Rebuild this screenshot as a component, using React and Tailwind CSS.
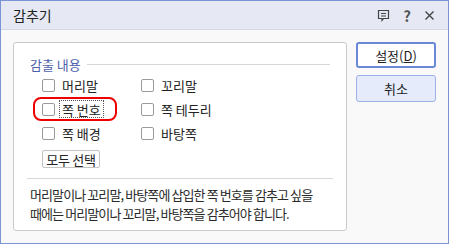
import React from "react";

const FONT = { fontFamily: '"Noto Sans CJK KR", "Noto Sans", sans-serif' };

function Check({ label, focused }) {
  return (
    <div className="flex items-center h-[24px]">
      <span className="w-[13px] h-[13px] border border-[#9a9a9a] rounded-[2px] bg-white shrink-0" />
      <span
        className={`ml-[4px] px-[2px] h-[18px] flex items-center border ${
          focused ? "border-dotted border-[#555]" : "border-transparent"
        }`}
      >
        {label}
      </span>
    </div>
  );
}

export default function App() {
  return (
    <div
      style={FONT}
      className="w-[449px] h-[244px] border border-[#7b94d6] bg-[#f9f9f9] flex flex-col text-[13px] text-[#222] leading-none"
    >
      {/* title bar */}
      <div className="h-[29px] shrink-0 bg-[#e6e9f4] border-b border-[#d3d7e8] flex items-center pl-[12px] pr-[13px]">
        <span className="text-[14px] text-[#222]">감추기</span>
        <div className="ml-auto flex items-center gap-[12px] text-[#444]">
          <svg width="13" height="13" viewBox="0 0 13 13" fill="none" stroke="#444" strokeWidth="1.2">
            <path d="M1.5 1.5h10v8h-5l-1.5 1.8v-1.8h-3.5z" />
            <path d="M4 4.5h5M4 7h5" />
          </svg>
          <span className="text-[15px] font-bold text-[#555] w-[10px] text-center">?</span>
          <svg width="11" height="11" viewBox="0 0 11 11" stroke="#444" strokeWidth="1.4">
            <path d="M1.5 1.5l8 8M9.5 1.5l-8 8" />
          </svg>
        </div>
      </div>

      {/* body */}
      <div className="flex pl-[12px] pt-[12px]">
        <div className="w-[334px] h-[189px] bg-white border border-[#c9c9c9] rounded-[3px] px-[16px] pt-[12px]">
          <div className="flex items-center h-[18px]">
            <span className="text-[#4b60ab]">감출 내용</span>
            <span className="flex-1 ml-[6px] h-px bg-[#d6d6d6]" />
          </div>

          <div className="pl-[12px] grid grid-cols-[99px_auto]">
            <Check label="머리말" />
            <Check label="꼬리말" />
            <div className="relative">
              <Check label="쪽 번호" focused />
              <span className="absolute left-[-9px] top-0 w-[84px] h-[24px] border-[2.5px] border-[#ee0000] rounded-[8px]" />
            </div>
            <Check label="쪽 테두리" />
            <Check label="쪽 배경" />
            <Check label="바탕쪽" />
          </div>

          <div className="pl-[12px] mt-[5px]">
            <div className="w-[58px] h-[18px] border border-[#c3c3c3] rounded-[2px] bg-[#fdfdfd] flex items-center justify-center tracking-[-0.3px]">
              모두 선택
            </div>
          </div>

          <div className="mt-[10px] -mx-[3px] h-px bg-[#d6d6d6]" />

          <div className="mt-[6px] leading-[19px] text-[13px] tracking-[-0.9px] whitespace-nowrap text-[#2a2a2a]">
            머리말이나 꼬리말, 바탕쪽에 삽입한 쪽 번호를 감추고 싶을
            <br />
            때에는 머리말이나 꼬리말, 바탕쪽을 감추어야 합니다.
          </div>
        </div>

        <div className="ml-[9px] flex flex-col gap-[7px]">
          <div className="w-[80px] h-[26px] border-2 border-[#6b88d8] rounded-[3px] bg-white flex items-center justify-center">
            설정(<span className="underline">D</span>)
          </div>
          <div className="w-[80px] h-[27px] border border-[#9db0e6] rounded-[3px] bg-[#e5ebfb] flex items-center justify-center">
            취소
          </div>
        </div>
      </div>
    </div>
  );
}
